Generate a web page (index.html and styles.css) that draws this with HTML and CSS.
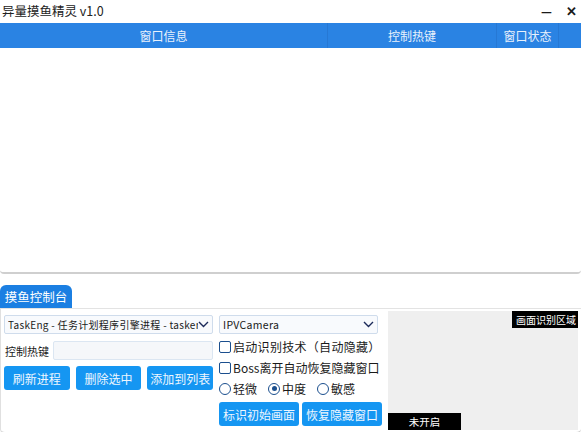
FILE: index.html
```html
<!DOCTYPE html>
<html lang="zh">
<head>
    <meta charset="UTF-8">
    <title>异量摸鱼精灵 v1.0</title>
    <link rel="stylesheet" href="styles.css">
</head>
<body>
    <div class="titlebar">
        <span class="titlebar__title">异量摸鱼精灵 v1.0</span>
        <span class="titlebar__min">—</span>
        <span class="titlebar__close">✕</span>
    </div>

    <div class="tabela">
        <div class="tabela__header">
            <div class="tabela__col tabela__col--info">窗口信息</div>
            <div class="tabela__col tabela__col--hotkey">控制热键</div>
            <div class="tabela__col tabela__col--status">窗口状态</div>
            <div class="tabela__col tabela__col--rest"></div>
        </div>
        <div class="tabela__body"></div>
    </div>

    <div class="aba">摸鱼控制台</div>

    <div class="painel">
        <div class="painel__esquerda">
            <div class="combo">
                <span class="combo__texto">TaskEng - 任务计划程序引擎进程 - taskeng</span>
                <svg class="combo__seta" width="11" height="7" viewBox="0 0 11 7"><path d="M1 1 L5.5 5.5 L10 1" fill="none" stroke="#1c2a5a" stroke-width="1.4"/></svg>
            </div>
            <div class="linha">
                <span class="linha__label">控制热键</span>
                <div class="campo"></div>
            </div>
            <div class="botoes">
                <button class="botao botao--pequeno">刷新进程</button>
                <button class="botao botao--pequeno">删除选中</button>
                <button class="botao botao--grande">添加到列表</button>
            </div>
        </div>

        <div class="painel__meio">
            <div class="combo">
                <span class="combo__texto">IPVCamera</span>
                <svg class="combo__seta" width="11" height="7" viewBox="0 0 11 7"><path d="M1 1 L5.5 5.5 L10 1" fill="none" stroke="#1c2a5a" stroke-width="1.4"/></svg>
            </div>
            <label class="opcao"><span class="caixa"></span>启动识别技术（自动隐藏）</label>
            <label class="opcao"><span class="caixa"></span>Boss离开自动恢复隐藏窗口</label>
            <div class="radios">
                <label class="opcao"><span class="radio"></span>轻微</label>
                <label class="opcao"><span class="radio radio--ativo"></span>中度</label>
                <label class="opcao"><span class="radio"></span>敏感</label>
            </div>
            <div class="botoes">
                <button class="botao botao--medio">标识初始画面</button>
                <button class="botao botao--medio">恢复隐藏窗口</button>
            </div>
        </div>

        <div class="previa">
            <span class="previa__titulo">画面识别区域</span>
            <span class="previa__estado">未开启</span>
        </div>
    </div>
</body>
</html>
```

FILE: styles.css
```css
body {
    margin: 0;
    width: 581px;
    height: 432px;
    background: white;
    font-family: "Noto Sans CJK SC", "Noto Sans", sans-serif;
    color: #1a1a1a;
    overflow: hidden;
}

.titlebar {
    height: 20px;
    display: flex;
    align-items: center;
    padding-left: 2px;
    font-size: 12.5px;
}

.titlebar__title {
    flex: 1;
    color: #222;
}

.titlebar__min {
    font-size: 12px;
    font-weight: bold;
    margin-right: 14px;
}

.titlebar__close {
    font-size: 13px;
    font-weight: bold;
    margin-right: 4px;
}

.tabela {
    margin-top: 3px;
    height: 249px;
    border-bottom: 2px solid #cfcfcf;
    border-radius: 0 0 4px 4px;
    display: flex;
    flex-direction: column;
}

.tabela__header {
    height: 25px;
    background: #2a83e3;
    display: flex;
    color: #e8f1fc;
    font-size: 12px;
}

.tabela__col {
    display: flex;
    align-items: center;
    justify-content: center;
    border-right: 1px solid #2678d4;
}

.tabela__col--info { width: 327px; }
.tabela__col--hotkey { width: 168px; }
.tabela__col--status { width: 61px; }
.tabela__col--rest { flex: 1; border-right: none; }

.tabela__body {
    flex: 1;
}

.aba {
    margin-top: 11px;
    width: 72px;
    height: 23px;
    background: #1b7fe2;
    color: white;
    font-size: 12.5px;
    display: flex;
    align-items: center;
    justify-content: center;
    border-radius: 6px 6px 0 0;
}

.painel {
    height: 117px;
    border-top: 1px solid #e3e3e3;
    border-left: 1px solid #e0e0e0;
    border-bottom: 2px solid #d0d0d0;
    border-radius: 0 0 5px 5px;
    display: flex;
    padding: 3px 3px 3px 3px;
    gap: 6px;
}

.painel__esquerda {
    width: 209px;
    display: flex;
    flex-direction: column;
    padding-top: 3px;
}

.painel__meio {
    width: 163px;
    display: flex;
    flex-direction: column;
    padding-top: 3px;
}

.combo {
    height: 17px;
    border: 1px solid #cfdcec;
    border-radius: 2px;
    background: #f8fafd;
    display: flex;
    align-items: center;
    padding: 0 3px 0 3px;
    font-size: 10.5px;
    overflow: hidden;
}

.painel__meio .combo {
    width: 151px;
}

.combo__texto {
    flex: 1;
    white-space: nowrap;
    overflow: hidden;
    letter-spacing: 0.3px;
}

.painel__esquerda .combo__texto {
    font-size: 10px;
}

.combo__seta {
    flex: none;
}

.linha {
    display: flex;
    align-items: center;
    margin-top: 7px;
    height: 19px;
}

.linha__label {
    width: 48px;
    font-size: 11px;
    padding-left: 1px;
}

.campo {
    flex: 1;
    height: 17px;
    border: 1px solid #dbe6f2;
    border-radius: 2px;
    background: #f5f7fa;
}

.botoes {
    display: flex;
    gap: 6px;
    margin-top: 6px;
}

.botao {
    height: 24px;
    border: none;
    border-radius: 3px;
    background: #1596f2;
    color: #eef6ff;
    font-family: inherit;
    font-size: 12px;
    padding: 0;
}

.botao--pequeno { width: 67px; }
.botao--grande { width: 67px; }
.botao--medio { width: 80px; }

.painel__meio .botoes {
    gap: 3px;
    margin-top: 3px;
}

.opcao {
    display: flex;
    align-items: center;
    font-size: 12px;
    height: 21px;
    white-space: nowrap;
}

.painel__meio > .opcao:first-of-type {
    margin-top: 2px;
    letter-spacing: 0.3px;
}

.caixa {
    width: 10px;
    height: 10px;
    border: 1px solid #1b4f8e;
    border-radius: 2px;
    margin-right: 2px;
    background: white;
}

.radios {
    display: flex;
    gap: 11px;
}

.radio {
    width: 10px;
    height: 10px;
    border: 1px solid #1b4f8e;
    border-radius: 50%;
    margin-right: 2px;
    display: flex;
    align-items: center;
    justify-content: center;
}

.radio--ativo::after {
    content: "";
    width: 5px;
    height: 5px;
    border-radius: 50%;
    background: #1b4f8e;
}

.previa {
    flex: 1;
    margin-top: -1px;
    margin-bottom: -1px;
    background: #efefef;
    position: relative;
}

.previa__titulo {
    position: absolute;
    top: 0;
    right: 0;
    background: black;
    color: white;
    font-size: 10px;
    padding: 1px 2px 1px 4px;
    line-height: 15px;
}

.previa__estado {
    position: absolute;
    left: 0;
    bottom: 0;
    width: 73px;
    height: 17px;
    background: black;
    color: white;
    font-size: 10.5px;
    display: flex;
    align-items: center;
    justify-content: center;
}
```
